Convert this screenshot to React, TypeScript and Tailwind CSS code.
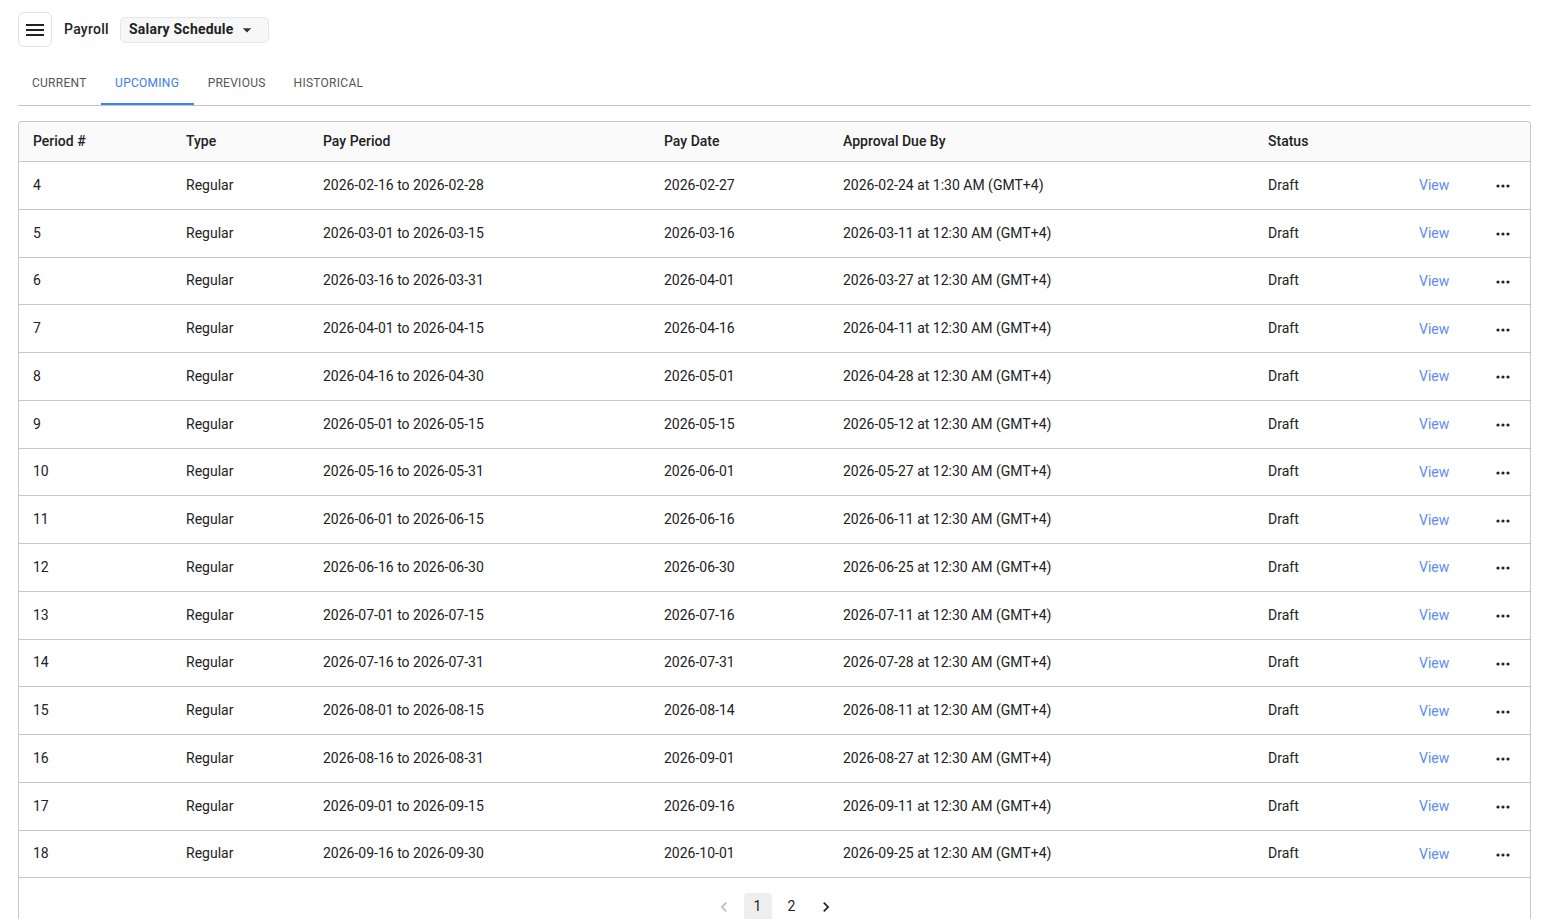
import React from "react";

interface PayrollRow {
  period: number;
  type: string;
  start: string;
  end: string;
  payDate: string;
  due: string;
  status: string;
}

const rows: PayrollRow[] = [
  { period: 4, type: "Regular", start: "2026-02-16", end: "2026-02-28", payDate: "2026-02-27", due: "2026-02-24 at 1:30 AM (GMT+4)", status: "Draft" },
  { period: 5, type: "Regular", start: "2026-03-01", end: "2026-03-15", payDate: "2026-03-16", due: "2026-03-11 at 12:30 AM (GMT+4)", status: "Draft" },
  { period: 6, type: "Regular", start: "2026-03-16", end: "2026-03-31", payDate: "2026-04-01", due: "2026-03-27 at 12:30 AM (GMT+4)", status: "Draft" },
  { period: 7, type: "Regular", start: "2026-04-01", end: "2026-04-15", payDate: "2026-04-16", due: "2026-04-11 at 12:30 AM (GMT+4)", status: "Draft" },
  { period: 8, type: "Regular", start: "2026-04-16", end: "2026-04-30", payDate: "2026-05-01", due: "2026-04-28 at 12:30 AM (GMT+4)", status: "Draft" },
  { period: 9, type: "Regular", start: "2026-05-01", end: "2026-05-15", payDate: "2026-05-15", due: "2026-05-12 at 12:30 AM (GMT+4)", status: "Draft" },
  { period: 10, type: "Regular", start: "2026-05-16", end: "2026-05-31", payDate: "2026-06-01", due: "2026-05-27 at 12:30 AM (GMT+4)", status: "Draft" },
  { period: 11, type: "Regular", start: "2026-06-01", end: "2026-06-15", payDate: "2026-06-16", due: "2026-06-11 at 12:30 AM (GMT+4)", status: "Draft" },
  { period: 12, type: "Regular", start: "2026-06-16", end: "2026-06-30", payDate: "2026-06-30", due: "2026-06-25 at 12:30 AM (GMT+4)", status: "Draft" },
  { period: 13, type: "Regular", start: "2026-07-01", end: "2026-07-15", payDate: "2026-07-16", due: "2026-07-11 at 12:30 AM (GMT+4)", status: "Draft" },
  { period: 14, type: "Regular", start: "2026-07-16", end: "2026-07-31", payDate: "2026-07-31", due: "2026-07-28 at 12:30 AM (GMT+4)", status: "Draft" },
  { period: 15, type: "Regular", start: "2026-08-01", end: "2026-08-15", payDate: "2026-08-14", due: "2026-08-11 at 12:30 AM (GMT+4)", status: "Draft" },
  { period: 16, type: "Regular", start: "2026-08-16", end: "2026-08-31", payDate: "2026-09-01", due: "2026-08-27 at 12:30 AM (GMT+4)", status: "Draft" },
  { period: 17, type: "Regular", start: "2026-09-01", end: "2026-09-15", payDate: "2026-09-16", due: "2026-09-11 at 12:30 AM (GMT+4)", status: "Draft" },
  { period: 18, type: "Regular", start: "2026-09-16", end: "2026-09-30", payDate: "2026-10-01", due: "2026-09-25 at 12:30 AM (GMT+4)", status: "Draft" },
];

const tabs = ["Current", "Upcoming", "Previous", "Historical"];

const gridCols =
  "grid grid-cols-[167px_137px_341px_179px_425px_151px_77px_1fr] items-center";

const MenuIcon = () => (
  <svg width="24" height="24" viewBox="0 0 24 24" fill="#222">
    <path d="M3 18h18v-2H3zm0-5h18v-2H3zm0-7v2h18V6z" />
  </svg>
);

const CaretIcon = () => (
  <svg width="20" height="20" viewBox="0 0 24 24" fill="#333">
    <path d="m7 10 5 5 5-5z" />
  </svg>
);

const DotsIcon = () => (
  <svg width="14" height="4" viewBox="0 0 14 4" fill="#222">
    <circle cx="2" cy="2" r="1.6" />
    <circle cx="7" cy="2" r="1.6" />
    <circle cx="12" cy="2" r="1.6" />
  </svg>
);

const Chevron = ({ dir, muted }: { dir: "left" | "right"; muted?: boolean }) => (
  <svg
    width="20"
    height="20"
    viewBox="0 0 24 24"
    fill={muted ? "#bdbdbd" : "#222"}
  >
    {dir === "left" ? (
      <path d="M15.41 7.41 14 6l-6 6 6 6 1.41-1.41L10.83 12z" />
    ) : (
      <path d="M10 6 8.59 7.41 13.17 12l-4.58 4.59L10 18l6-6z" />
    )}
  </svg>
);

export default function App() {
  const activeTab = "Upcoming";

  return (
    <div
      className="min-h-screen bg-white pl-[18px] pr-[21px] pt-3 text-[14px] text-[#222]"
      style={{ fontFamily: "Roboto, 'Liberation Sans', sans-serif" }}
    >
      {/* top bar */}
      <div className="flex items-center">
        <button className="flex h-[35px] w-[34px] items-center justify-center rounded-[6px] border border-[#e2e2e2] bg-white">
          <MenuIcon />
        </button>
        <span className="ml-3 font-medium tracking-[0.02em]">Payroll</span>
        <button className="ml-[11px] flex h-[26px] w-[149px] items-center justify-between rounded-[5px] border border-[#e6e6e6] bg-[#f7f7f7] pl-[8px] pr-[11px] font-bold tracking-[0.015em] text-[#222]">
          Salary Schedule
          <CaretIcon />
        </button>
      </div>

      {/* tabs */}
      <div className="mt-3 flex border-b border-[#c4c4c4]">
        {tabs.map((tab) => {
          const active = tab === activeTab;
          return (
            <div
              key={tab}
              className={
                active
                  ? "flex h-[46px] items-center border-b-2 border-[#3b82f6] px-[14.5px] pt-[4px] text-[12px] uppercase tracking-[0.022em] text-[#3b7de9]"
                  : "flex h-[46px] items-center border-b-2 border-transparent px-[14px] pt-[4px] text-[12px] uppercase tracking-[0.022em] text-[#555]"
              }
            >
              {tab}
            </div>
          );
        })}
      </div>

      {/* table card */}
      <div className="mt-[15px] rounded-t-[4px] border border-b-0 border-[#c8c8c8] pb-2">
        <div className={`${gridCols} h-[40px] rounded-t-[4px] border-b border-[#c8c8c8] bg-[#fafafa] font-medium`}>
          <div className="pl-[14px]">Period #</div>
          <div>Type</div>
          <div>Pay Period</div>
          <div>Pay Date</div>
          <div>Approval Due By</div>
          <div>Status</div>
          <div />
          <div />
        </div>
        {rows.map((row) => (
          <div
            key={row.period}
            className={`${gridCols} h-[47.75px] border-b border-[#c8c8c8]`}
          >
            <div className="pl-[14px]">{row.period}</div>
            <div>{row.type}</div>
            <div>
              {row.start} to {row.end}
            </div>
            <div>{row.payDate}</div>
            <div>{row.due}</div>
            <div>{row.status}</div>
            <div className="pt-[1px] text-[#5b8cf5]">View</div>
            <div className="flex pt-[2px]">
              <DotsIcon />
            </div>
          </div>
        ))}

        {/* pagination */}
        <div className="mt-[15px] flex items-center justify-center gap-[6px]">
          <div className="flex h-[27px] w-7 items-center justify-center">
            <Chevron dir="left" muted />
          </div>
          <div className="flex h-[27px] w-7 items-center justify-center rounded-[4px] bg-[#eeeeee]">
            1
          </div>
          <div className="flex h-[27px] w-7 items-center justify-center">2</div>
          <div className="flex h-[27px] w-7 items-center justify-center">
            <Chevron dir="right" />
          </div>
        </div>
      </div>
    </div>
  );
}
